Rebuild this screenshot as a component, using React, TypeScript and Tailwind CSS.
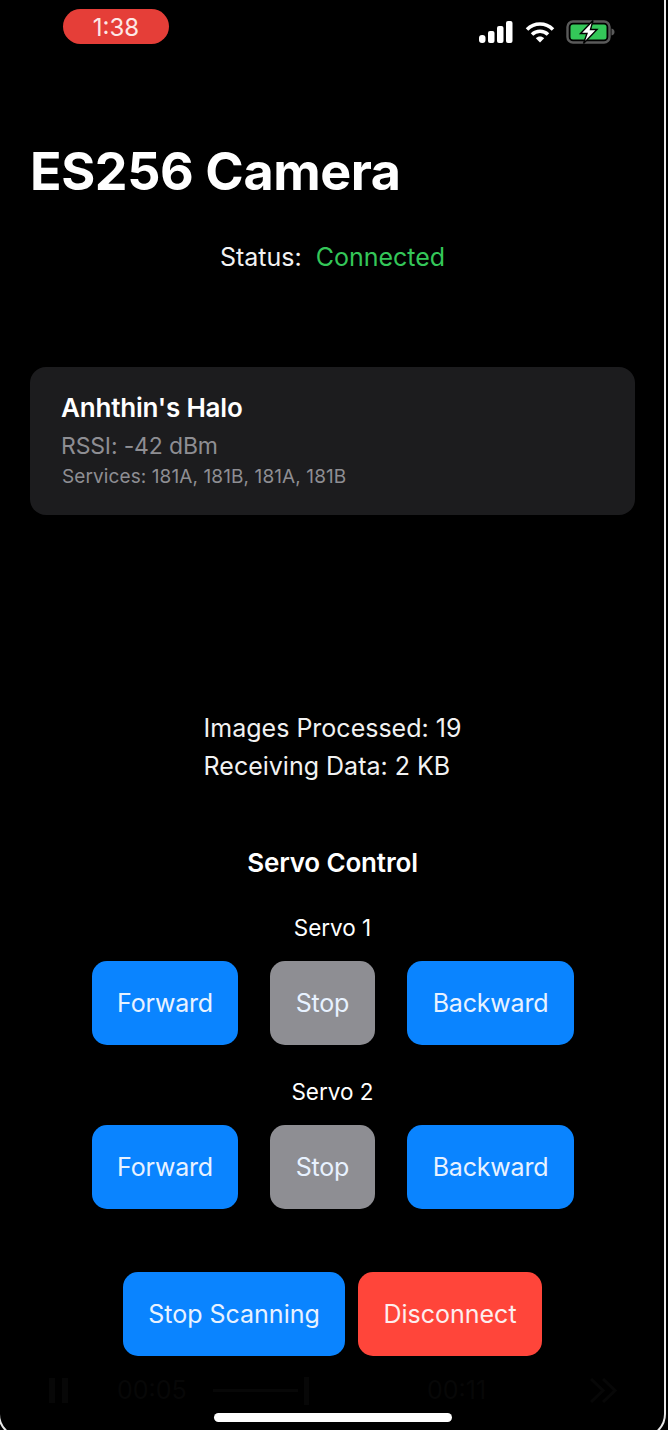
const FONT = "font-['Inter','Noto_Sans',sans-serif]";

function ServoButton({ label, grey, width }: { label: string; grey?: boolean; width: string }) {
  return (
    <button
      className={`h-[84px] ${width} rounded-[15px] pt-[2px] text-[25px] text-[#e8f2ff] tracking-[-0.2px] ${grey ? 'bg-[#8e8e93]' : 'bg-[#0a84ff]'}`}
    >
      {label}
    </button>
  );
}

function ServoRow({ title }: { title: string }) {
  return (
    <div className="flex flex-col">
      <div className="pr-[3px] text-center text-[22.5px] leading-[30px] text-white">{title}</div>
      <div className="mt-[18px] flex gap-[32px] pl-[92px]">
        <ServoButton label="Forward" width="w-[146px]" />
        <ServoButton label="Stop" grey width="w-[105px]" />
        <ServoButton label="Backward" width="w-[167px]" />
      </div>
    </div>
  );
}

function StatusIcons() {
  return (
    <div className="flex items-center gap-[11px]">
      <svg width="34" height="22" viewBox="0 0 34 22" fill="#fff" className="mr-[1px]">
        <rect x="0" y="14" width="6.5" height="8" rx="3" />
        <rect x="9" y="10" width="6.5" height="12" rx="2" />
        <rect x="18" y="5" width="6.5" height="17" rx="2" />
        <rect x="27" y="0" width="6.5" height="22" rx="2" />
      </svg>
      <svg width="30" height="22" viewBox="0 0 30 22" fill="none" stroke="#fff" strokeWidth="3.6">
        <path d="M2 8.5C9.5 1.2 20.5 1.2 28 8.5" />
        <path d="M7 13.5C11.5 9.2 18.5 9.2 23 13.5" />
        <path d="M15 21.5L10.8 17.2C13.2 15 16.8 15 19.2 17.2Z" fill="#fff" stroke="none" />
      </svg>
      <svg width="50" height="24" viewBox="0 0 50 24">
        <rect x="1.5" y="1.5" width="42" height="21" rx="5.5" fill="#000" stroke="#5a5a5a" strokeWidth="2.4" />
        <rect x="4.5" y="4.5" width="36" height="15" rx="2.5" fill="#34c759" />
        <path d="M45.5 8.5C47.5 9 48.5 10.3 48.5 12C48.5 13.7 47.5 15 45.5 15.5Z" fill="#5a5a5a" />
        <path d="M27 0.5L14.5 13.5H21L17.5 23.5L31 9.5H24.5Z" fill="#fff" stroke="#000" strokeWidth="1.4" />
      </svg>
    </div>
  );
}

// the player controls of the recording barely show through behind the app
function GhostPlayer() {
  return (
    <div className="mt-[22px] flex h-[25px] items-center pl-[49px] text-[25px] text-[#070707]">
      <svg width="19" height="25" viewBox="0 0 19 25" fill="#070707">
        <rect x="0" y="0" width="6" height="25" />
        <rect x="13" y="0" width="6" height="25" />
      </svg>
      <span className="ml-[49px] w-[64px]">00:05</span>
      <div className="ml-[32px] h-[3px] w-[85px] bg-[#070707]" />
      <div className="ml-[6px] h-[28px] w-[5px] bg-[#070707]" />
      <span className="ml-[118px] w-[64px]">00:11</span>
      <svg width="28" height="25" viewBox="0 0 28 25" fill="none" stroke="#070707" strokeWidth="3" className="ml-[98px]">
        <path d="M2 1L14 12.5L2 24M14 1L26 12.5L14 24" />
      </svg>
    </div>
  );
}

export default function App() {
  return (
    <div className={`relative h-[1430px] w-[668px] overflow-hidden bg-black text-white ${FONT}`}>
      {/* status bar */}
      <div className="flex items-start justify-between pl-[63px] pr-[52px] pt-[9px]">
        <div className="flex h-[35px] w-[106px] items-center justify-center rounded-[18px] bg-[#e53e38] pt-[2px] text-[24px] text-[#fde8e6]">
          1:38
        </div>
        <div className="pt-[11px]">
          <StatusIcons />
        </div>
      </div>

      <h1 className="mt-[99px] pl-[30px] text-[52px] leading-[58px] font-bold tracking-[-0.4px]">ES256 Camera</h1>

      <div className="mt-[40px] flex justify-center gap-[14px] pr-[3px] text-[25px] leading-[32px]">
        <span className="text-[#f2f2f2]">Status:</span>
        <span className="text-[#34c759]">Connected</span>
      </div>

      {/* device card */}
      <div className="mx-[30px] mt-[94px] h-[148px] w-[605px] rounded-[16px] bg-[#1c1c1e] pl-[31px] pt-[25px]">
        <div className="text-[26px] leading-[32px] font-semibold tracking-[-0.2px]">Anhthin's Halo</div>
        <div className="mt-[7px] text-[23px] leading-[30px] tracking-[-0.15px] text-[#8e8e93]">RSSI: -42 dBm</div>
        <div className="mt-[3px] pl-[1px] text-[19px] leading-[26px] tracking-[0.1px] text-[#8e8e93]">
          Services: 181A, 181B, 181A, 181B
        </div>
      </div>

      <div className="mx-auto mt-[194px] w-fit -translate-x-[1.5px] text-[25px] leading-[38px] text-[#f2f2f2]">
        <div>Images Processed: 19</div>
        <div>Receiving Data: 2 KB</div>
      </div>

      <div className="mt-[62px] pr-[3px] text-center text-[26px] leading-[32px] font-semibold tracking-[-0.15px]">
        Servo Control
      </div>

      <div className="mt-[34px] flex flex-col gap-[32px]">
        <ServoRow title="Servo 1" />
        <ServoRow title="Servo 2" />
      </div>

      <div className="mt-[63px] flex pl-[123px]">
        <button className="h-[84px] w-[222px] rounded-[15px] bg-[#0a84ff] pt-[2px] text-[25px] text-[#e8f2ff]">
          Stop Scanning
        </button>
        <button className="ml-[13px] h-[84px] w-[184px] rounded-[15px] bg-[#ff453a] pt-[2px] text-[25px] text-[#fdeeee]">
          Disconnect
        </button>
      </div>

      <GhostPlayer />

      {/* home indicator */}
      <div className="absolute bottom-[8px] left-[214px] h-[9px] w-[238px] rounded-full bg-white" />
      {/* edge of the recorded screen */}
      <div className="pointer-events-none absolute -bottom-[8px] -left-[2px] -top-[40px] right-[2px] rounded-[24px] border-2 border-[#e8e8e8]" />
    </div>
  );
}
